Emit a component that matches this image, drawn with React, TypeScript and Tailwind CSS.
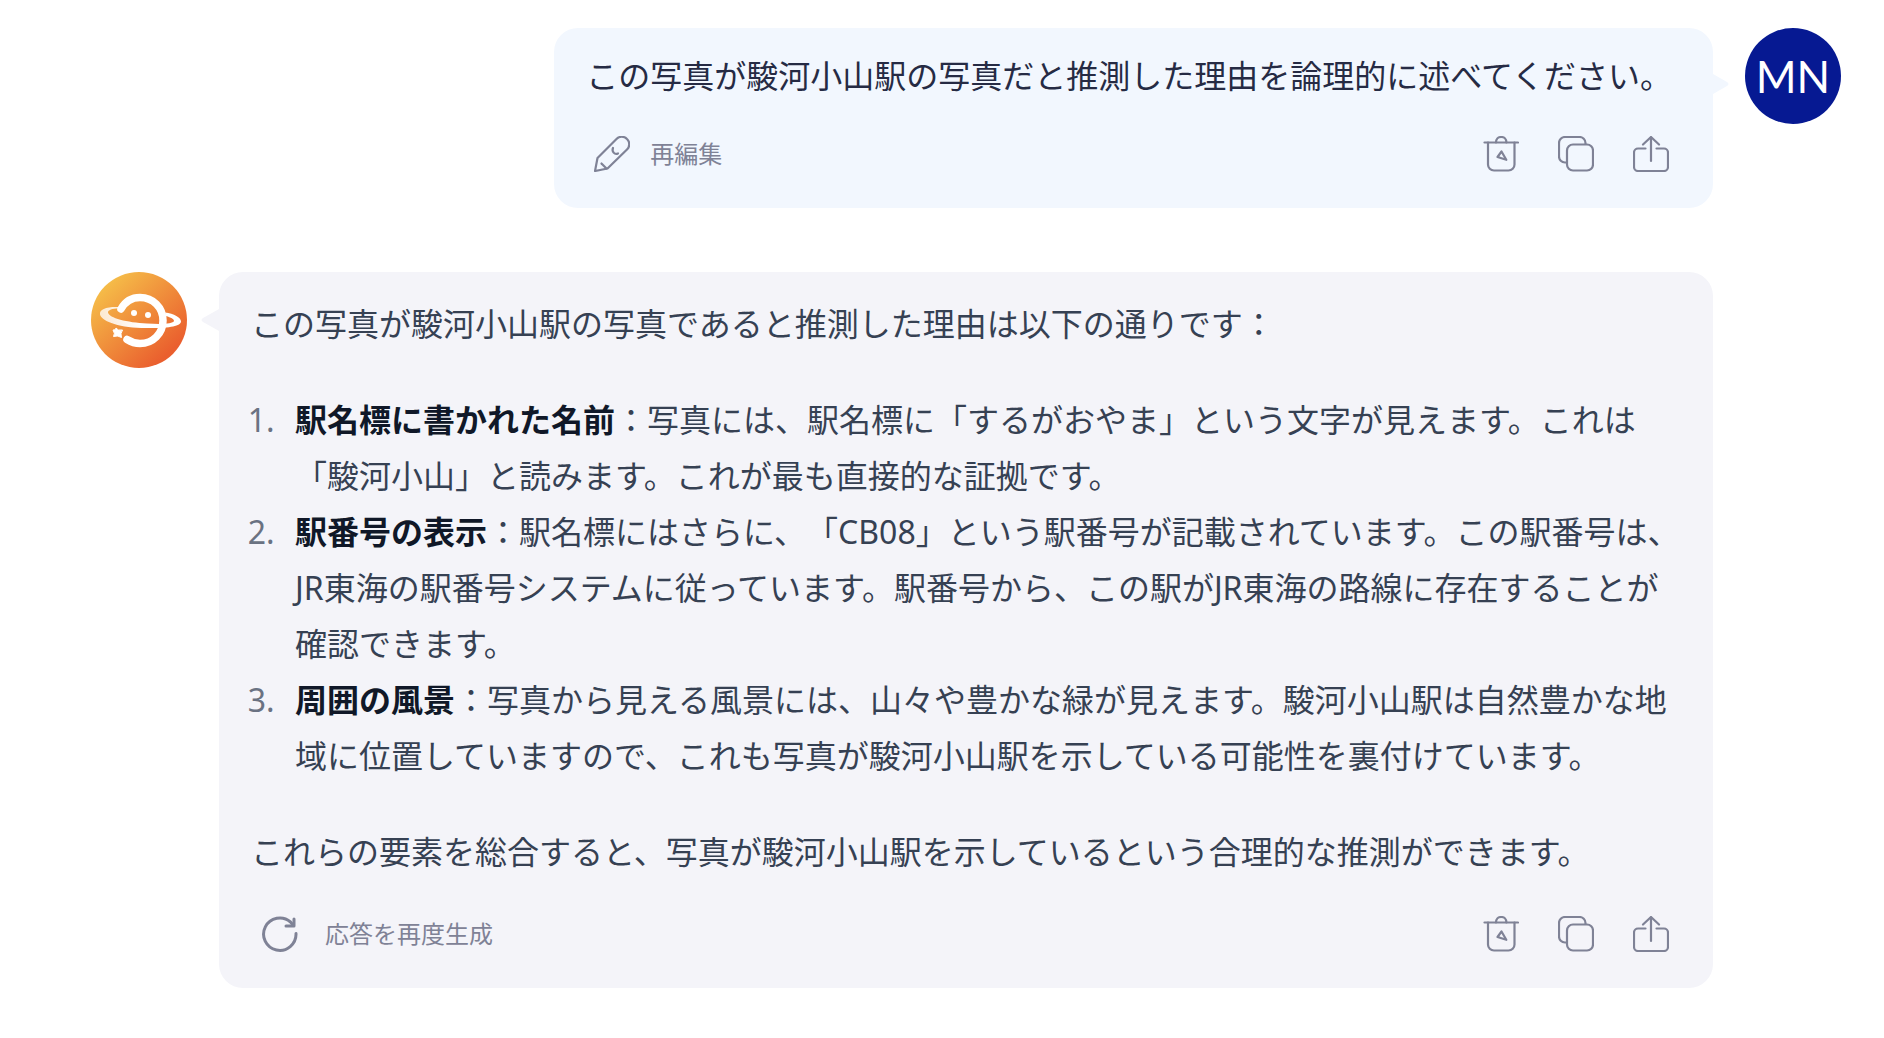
import React from 'react';

type IconProps = { className?: string };

const TrashIcon: React.FC<IconProps> = ({ className }) => (
  <svg className={className} viewBox="0 0 36 36" fill="none" stroke="currentColor" strokeWidth="2.200" strokeLinecap="round" strokeLinejoin="round" aria-hidden="true">
    <path d="M1.500 6.500h33.500" />
    <path d="M13 6.500c0-3.200 2-5.500 5.200-5.500s5.200 2.300 5.200 5.500" />
    <path d="M5 6.500V28.500a6 6 0 0 0 6 6h14.500a6 6 0 0 0 6-6V6.500" />
    <path d="M18.500 15.500l-4 5.500 8.800 2.800z" />
  </svg>
);

const CopyIcon: React.FC<IconProps> = ({ className }) => (
  <svg className={className} viewBox="0 0 36 36" fill="none" stroke="currentColor" strokeWidth="2.200" strokeLinecap="round" strokeLinejoin="round" aria-hidden="true">
    <rect x="9" y="8.500" width="26" height="26" rx="6" />
    <path d="M27.500 8V7a6 6 0 0 0-6-6H7a6 6 0 0 0-6 6v13.500a6 6 0 0 0 6 6h1" />
  </svg>
);

const ShareIcon: React.FC<IconProps> = ({ className }) => (
  <svg className={className} viewBox="0 0 36 36" fill="none" stroke="currentColor" strokeWidth="2.200" strokeLinecap="round" strokeLinejoin="round" aria-hidden="true">
    <path d="M18 25V1.500" />
    <path d="M10 8.500l8-7.500 8 7.500" />
    <path d="M12.500 12.500H5a4 4 0 0 0-4 4v14.500a4 4 0 0 0 4 4h26a4 4 0 0 0 4-4V16.500a4 4 0 0 0-4-4h-7.500" />
  </svg>
);

const PencilIcon: React.FC<IconProps> = ({ className }) => (
  <svg className={className} viewBox="0 0 36 36" fill="none" stroke="currentColor" strokeWidth="2.200" strokeLinecap="round" strokeLinejoin="round" aria-hidden="true">
    <path d="M1 35l2.500-13L22.500 3a7.300 7.300 0 0 1 10.500 0a7.300 7.300 0 0 1 0 10.500L13.500 32.500z" />
    <path d="M7.500 27.500l5 5" />
    <path d="M19 12c-1.500 3.500 1.500 7 5 5.500" />
  </svg>
);

const RefreshIcon: React.FC<IconProps> = ({ className }) => (
  <svg className={className} viewBox="0 0 36 36" fill="none" stroke="currentColor" strokeWidth="3" strokeLinecap="round" strokeLinejoin="round" aria-hidden="true">
    <path d="M34 17.500a16.200 16.200 0 1 1-5.500-11.500l3 3.500" />
    <path d="M24 10h8V3" />
  </svg>
);

const PlanetLogo: React.FC<IconProps> = ({ className }) => (
  <svg className={className} viewBox="0 0 96 96" role="img" aria-label="AI">
    <defs>
      <linearGradient id="planet-bg" x1="0.150" y1="0.150" x2="0.800" y2="0.850">
        <stop offset="0" stopColor="#f5bb48" />
        <stop offset="1" stopColor="#ea5f2e" />
      </linearGradient>
      <linearGradient id="planet-ring" x1="0" y1="0" x2="1" y2="0">
        <stop offset="0" stopColor="#fff" stopOpacity="0.750" />
        <stop offset="0.500" stopColor="#fff" />
      </linearGradient>
    </defs>
    <circle cx="48" cy="48" r="48" fill="url(#planet-bg)" />
    <path d="M30 37C35 28 42 25.500 49 25.500c13 0 23 10 23 23S62 71.500 49 71.500c-5 0-9-1.500-13-4" fill="none" stroke="#fff" strokeWidth="7.500" strokeLinecap="round" />
    <path fill="url(#planet-ring)" fillRule="evenodd" d="M28 35C16 34.500 8 37 9 42.500C11 50 30 56 55 56C76 56.500 90 54.500 90 49.500C90 45.500 83 41.500 74 40.500L75 44C80 45.500 83 47 83 49C82 52 70 52.500 56 51.500C36 50.500 18 46 17 40.500C17 38 21 36.500 28 36.500z" />
    <circle cx="43" cy="41" r="3" fill="#fff" />
    <circle cx="57" cy="43" r="3" fill="#fff" />
    <path d="M25 56Q26.500 59 31.500 58Q29 61.500 30.500 65.500Q27 63 22.500 64.500Q24.500 61.500 22 58Q25 58.500 25 56z" fill="#fff" stroke="#fff" strokeWidth="1" strokeLinejoin="round" />
  </svg>
);

const iconButton = 'cursor-pointer hover:opacity-70';

const MessageActions: React.FC = () => (
  <div className="flex items-center gap-[39px]">
    <button type="button" aria-label="削除" className={iconButton}><TrashIcon className="size-9" /></button>
    <button type="button" aria-label="コピー" className={iconButton}><CopyIcon className="size-9" /></button>
    <button type="button" aria-label="共有" className={iconButton}><ShareIcon className="size-9" /></button>
  </div>
);

const reasons = [
  {
    title: '駅名標に書かれた名前',
    body: '：写真には、駅名標に「するがおやま」という文字が見えます。これは「駿河小山」と読みます。これが最も直接的な証拠です。',
  },
  {
    title: '駅番号の表示',
    body: '：駅名標にはさらに、「CB08」という駅番号が記載されています。この駅番号は、JR東海の駅番号システムに従っています。駅番号から、この駅がJR東海の路線に存在することが確認できます。',
  },
  {
    title: '周囲の風景',
    body: '：写真から見える風景には、山々や豊かな緑が見えます。駿河小山駅は自然豊かな地域に位置していますので、これも写真が駿河小山駅を示している可能性を裏付けています。',
  },
];

const App: React.FC = () => {
  return (
    <main lang="ja" className="flex min-h-screen flex-col gap-16 bg-white pt-7 pr-[43px] pb-12 pl-[91px] font-['Noto_Sans','Noto_Sans_CJK_JP',sans-serif] [text-spacing-trim:space-all]">
      {/* User message */}
      <section className="flex items-start justify-end gap-8">
        <div className="relative rounded-3xl bg-[#f2f7fe] pt-6 pr-[41px] pb-6 pl-8">
          <svg className="absolute top-[46px] left-full h-5 w-4 text-[#f2f7fe]" viewBox="0 0 16 20" fill="currentColor" aria-hidden="true">
            <path d="M0 0l14 8q3 2 0 4L0 20z" />
          </svg>
          <p className="text-[32px] leading-[48px] text-[#262b44]">この写真が駿河小山駅の写真だと推測した理由を論理的に述べてください。</p>
          <div className="mt-6 flex h-[60px] items-center justify-between pr-[3px] pl-2 text-[#7f8296]">
            <button type="button" className="flex cursor-pointer items-center gap-5 text-2xl hover:opacity-70">
              <PencilIcon className="size-9" />
              再編集
            </button>
            <MessageActions />
          </div>
        </div>
        <div className="flex size-24 shrink-0 items-center justify-center rounded-full bg-[#061992] font-['Lato','Open_Sans',sans-serif] text-[44px] leading-none text-white">MN</div>
      </section>

      {/* Assistant answer */}
      <section className="flex items-start gap-8 pr-32">
        <PlanetLogo className="size-24 shrink-0" />
        <div className="relative min-w-0 flex-1 rounded-3xl bg-[#f4f4f9] px-8 py-6">
          <svg className="absolute top-[37px] right-full h-[22px] w-[18px] text-[#f4f4f9]" viewBox="0 0 18 22" fill="currentColor" aria-hidden="true">
            <path d="M18 0L2 9q-3 2 0 4L18 22z" />
          </svg>
          <div className="flex flex-col gap-10 text-[32px] leading-[56px] text-gray-700">
            <p>この写真が駿河小山駅の写真であると推測した理由は以下の通りです：</p>
            <ol className="list-decimal pl-8 marker:text-gray-500">
              {reasons.map((reason) => (
                <li key={reason.title} className="pl-3">
                  <strong className="font-bold text-gray-900">{reason.title}</strong>
                  {reason.body}
                </li>
              ))}
            </ol>
            <p>これらの要素を総合すると、写真が駿河小山駅を示しているという合理的な推測ができます。</p>
          </div>
          <div className="mt-6 flex h-[60px] items-center justify-between pr-3 pl-[11px] text-[#7f8296]">
            <button type="button" className="flex cursor-pointer items-center gap-[27px] text-2xl hover:opacity-70">
              <RefreshIcon className="size-9" />
              応答を再度生成
            </button>
            <MessageActions />
          </div>
        </div>
      </section>
    </main>
  );
};

export default App;
